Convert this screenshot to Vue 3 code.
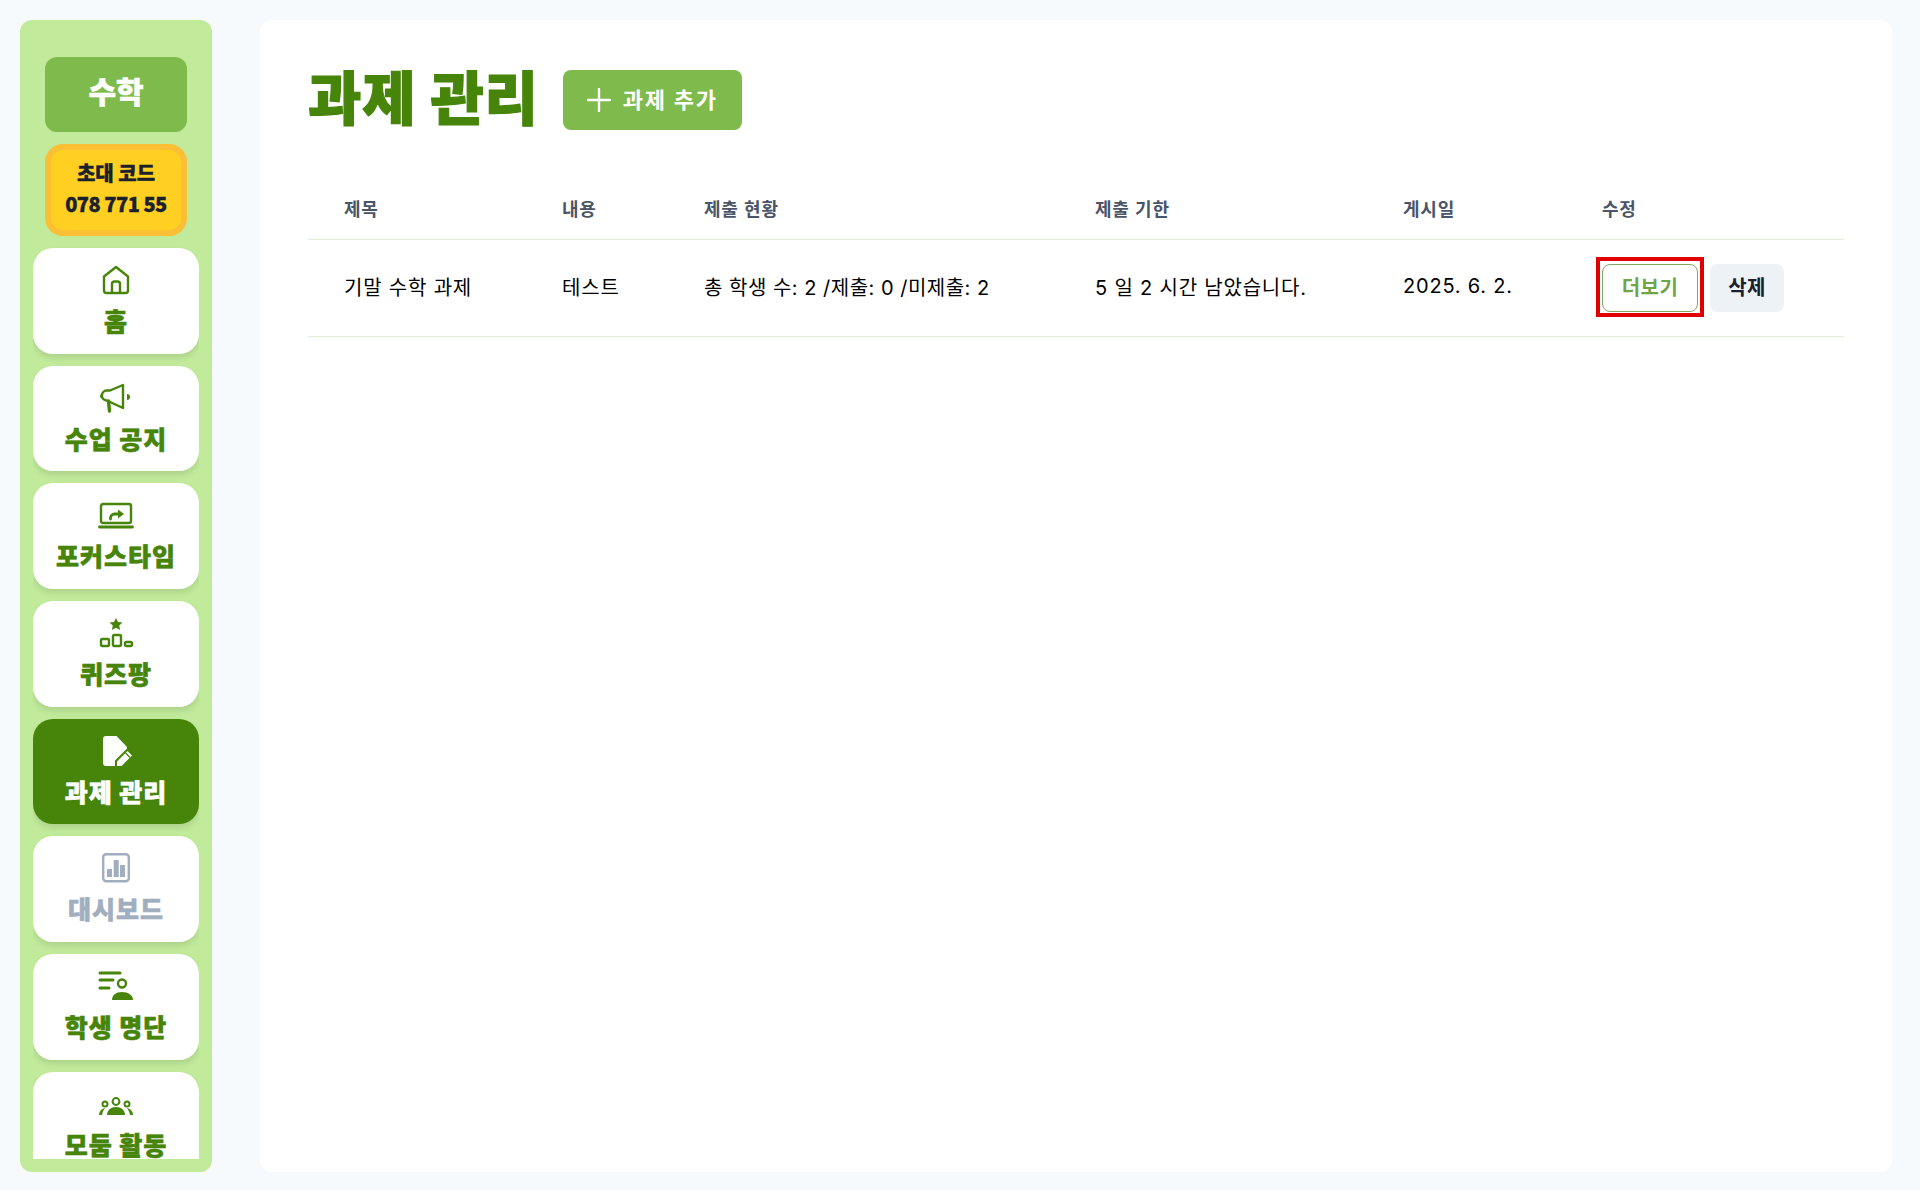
<script setup>
const items = [
  { key: 'home', label: '홈' },
  { key: 'notice', label: '수업 공지' },
  { key: 'focus', label: '포커스타임' },
  { key: 'quiz', label: '퀴즈팡' },
  { key: 'assign', label: '과제 관리', active: true },
  { key: 'dash', label: '대시보드', muted: true },
  { key: 'roster', label: '학생 명단' },
  { key: 'group', label: '모둠 활동' },
]
const columns = [
  { label: '제목', cls: 'c1' },
  { label: '내용', cls: 'c2' },
  { label: '제출 현황', cls: 'c3' },
  { label: '제출 기한', cls: 'c4' },
  { label: '게시일', cls: 'c5' },
  { label: '수정', cls: 'c6' },
]
</script>

<template>
  <div class="page">
    <aside class="sidebar">
      <div class="side-inner">
        <div class="subject">수학</div>
        <div class="code">
          <div>초대 코드</div>
          <div class="digits">078 771 55</div>
        </div>
        <a
          v-for="item in items"
          :key="item.key"
          class="nav"
          :class="{ active: item.active, muted: item.muted }"
        >
          <svg v-if="item.key === 'home'" class="ico" width="36" height="32" viewBox="0 0 36 32" fill="none" stroke="currentColor" stroke-width="2.4" stroke-linejoin="round">
            <path d="M18 3 L30 12.5 V26.5 a2.5 2.5 0 0 1 -2.5 2.5 H8.5 a2.5 2.5 0 0 1 -2.5 -2.5 V12.5 Z" />
            <path d="M14 29 V20 a2.5 2.5 0 0 1 2.5 -2.5 h3 a2.5 2.5 0 0 1 2.5 2.5 V29" />
          </svg>
          <svg v-else-if="item.key === 'notice'" class="ico" width="36" height="32" viewBox="0 0 36 32" fill="none" stroke="currentColor" stroke-width="2.4" stroke-linejoin="round">
            <path d="M25 3 L12 8.5 H9.5 a5 5 0 0 0 -1 10 L11 19.5 L25 26 Z" />
            <path d="M10.5 19 L11.5 29" stroke-width="3.4" stroke-linecap="round" />
            <path d="M29 12 a3 3 0 0 1 0 6 Z" fill="currentColor" stroke="none" />
            <path d="M4.5 11.5 a2.5 2.5 0 0 0 0 5 Z" fill="currentColor" stroke="none" />
          </svg>
          <svg v-else-if="item.key === 'focus'" class="ico" width="36" height="32" viewBox="0 0 36 32" fill="none" stroke="currentColor" stroke-width="2.4">
            <rect x="3" y="5" width="30" height="19" rx="2" />
            <path d="M1.5 28 H34.5" stroke-width="2.8" stroke-linecap="round" />
            <path d="M12.5 20 v-1 a4 4 0 0 1 4 -4 h4" stroke-width="2.8" stroke-linecap="round" />
            <path d="M20 10.5 L26 15 L20 19.5 Z" fill="currentColor" stroke="none" />
          </svg>
          <svg v-else-if="item.key === 'quiz'" class="ico" width="36" height="32" viewBox="0 0 36 32" fill="none" stroke="currentColor" stroke-width="2.4">
            <path d="M18 1 L20 5 L24.5 5.5 L21.2 8.5 L22.1 13 L18 10.7 L13.9 13 L14.8 8.5 L11.5 5.5 L16 5 Z" fill="currentColor" stroke="none" />
            <rect x="3" y="22" width="8" height="7" rx="1.5" />
            <rect x="15" y="18" width="8" height="11" rx="1.5" />
            <rect x="27" y="25" width="7" height="4" rx="1.5" />
          </svg>
          <svg v-else-if="item.key === 'assign'" class="ico" width="36" height="32" viewBox="0 0 36 32" fill="currentColor">
            <path d="M5 4 a3 3 0 0 1 3 -3 h10.5 L29 12 v1.5 L17 25.5 V31 H8 a3 3 0 0 1 -3 -3 Z" />
            <path d="M19 31 v-4.5 L29.5 16 l4.5 4.5 L23.5 31 Z" />
            <path d="M27.5 18 l4.5 4.5" stroke="#46850a" stroke-width="1.3" fill="none" />
          </svg>
          <svg v-else-if="item.key === 'dash'" class="ico" width="36" height="32" viewBox="0 0 36 32" fill="none" stroke="currentColor" stroke-width="2.4">
            <rect x="5.2" y="2.2" width="25.6" height="27" rx="3" />
            <rect x="9" y="17" width="5" height="8" fill="currentColor" stroke="none" />
            <rect x="15.7" y="8" width="5" height="17" fill="currentColor" stroke="none" />
            <rect x="22" y="13" width="5" height="12" fill="currentColor" stroke="none" />
          </svg>
          <svg v-else-if="item.key === 'roster'" class="ico" width="36" height="32" viewBox="0 0 36 32" fill="none" stroke="currentColor" stroke-width="3" stroke-linecap="round">
            <path d="M2 3 H22 M2 10 H15 M2 18 H11" />
            <circle cx="24" cy="13.5" r="4" stroke-width="2.4" />
            <path d="M14 30 c0 -5 4 -8 10 -8 s11 3 11 8 Z" fill="currentColor" stroke="none" />
          </svg>
          <svg v-else class="ico" width="36" height="32" viewBox="0 0 36 32" fill="none" stroke="currentColor" stroke-width="2">
            <circle cx="18" cy="13.5" r="3.4" />
            <circle cx="7" cy="16" r="2.5" />
            <circle cx="29" cy="16" r="2.5" />
            <path d="M9 27 c0 -5 4 -8 9 -8 s9 3 9 8 Z" fill="currentColor" stroke="none" />
            <path d="M1 27 c0 -3 2 -6 6 -7 c-1.5 2 -2.5 4 -3 7 Z M35 27 c0 -3 -2 -6 -6 -7 c1.5 2 2.5 4 3 7 Z" fill="currentColor" stroke="none" />
          </svg>
          <span class="nav-label">{{ item.label }}</span>
        </a>
      </div>
    </aside>

    <main class="main">
      <header class="head">
        <h1 class="title">과제 관리</h1>
        <button class="add">
          <svg width="24" height="24" viewBox="0 0 24 24" fill="none" stroke="currentColor" stroke-width="2.4" stroke-linecap="round">
            <path d="M12 1 V23 M1 12 H23" />
          </svg>
          <span>과제 추가</span>
        </button>
      </header>

      <table class="table">
        <thead>
          <tr>
            <th v-for="c in columns" :key="c.label" :class="c.cls">{{ c.label }}</th>
          </tr>
        </thead>
        <tbody>
          <tr>
            <td>기말 수학 과제</td>
            <td>테스트</td>
            <td class="status">총 학생 수: 2 /제출: 0 /미제출: 2</td>
            <td>5 일 2 시간 남았습니다.</td>
            <td>2025. 6. 2.</td>
            <td class="action-cell">
              <div class="actions">
                <button class="more">더보기</button>
                <button class="del">삭제</button>
              </div>
            </td>
          </tr>
        </tbody>
      </table>
    </main>
  </div>
</template>

<style>
html, body { margin: 0; padding: 0; }
</style>

<style scoped>
.page {
  display: flex;
  gap: 48px;
  box-sizing: border-box;
  height: 1190px;
  padding: 20px 28px 18px 20px;
  background: #f7fafd;
  font-family: Inter, "Noto Sans CJK KR", sans-serif;
  color: #000;
}
.sidebar {
  flex: 0 0 192px;
  box-sizing: border-box;
  padding: 13px;
  background: #c1eb9b;
  border-radius: 12px;
}
.side-inner {
  height: 100%;
  overflow: hidden;
  display: flex;
  flex-direction: column;
  gap: 12px;
  font-family: "Noto Sans CJK KR", sans-serif;
  font-weight: 900;
}
.subject {
  flex: none;
  box-sizing: border-box;
  height: 75px;
  margin: 24px 12px 0;
  padding-top: 13px;
  background: #7fba4c;
  border-radius: 12px;
  color: #fff;
  font-size: 30px;
  line-height: 40px;
  text-align: center;
  -webkit-text-stroke: 0.5px currentColor;
}
.code {
  flex: none;
  box-sizing: border-box;
  height: 92px;
  margin: 0 12px;
  padding-top: 6.5px;
  background: #ffd022;
  border: 6px solid #fbbf36;
  border-radius: 18px;
  color: #1a202c;
  font-size: 20px;
  line-height: 31px;
  text-align: center;
  -webkit-text-stroke: 0.4px currentColor;
}
.digits {
  letter-spacing: -0.5px;
}
.nav {
  flex: none;
  box-sizing: border-box;
  height: 105.7px;
  display: flex;
  flex-direction: column;
  align-items: center;
  padding-top: 16px;
  background: #fff;
  border-radius: 20px;
  box-shadow: 0 4px 6px rgba(0, 0, 0, 0.1);
  color: #46850a;
}
.nav.active { background: #46850a; color: #fff; }
.nav.muted { color: #a0aec0; }
.ico { flex: none; display: block; }
.nav-label {
  margin-top: 6px;
  font-size: 25px;
  line-height: 36px;
  letter-spacing: 1px;
  white-space: nowrap;
  -webkit-text-stroke: 0.6px currentColor;
}
.main {
  flex: 1;
  min-width: 0;
  box-sizing: border-box;
  padding: 50px 48px;
  background: #fff;
  border-radius: 12px;
}
.head {
  display: flex;
  align-items: center;
  gap: 24px;
  height: 60px;
  margin-bottom: 50px;
}
.title {
  margin: 0;
  padding-bottom: 11px;
  font-family: "Noto Sans CJK KR", sans-serif;
  font-weight: 900;
  font-size: 58px;
  line-height: 60px;
  letter-spacing: 0.8px;
  color: #46850a;
  -webkit-text-stroke: 1.2px currentColor;
}
.add {
  display: flex;
  align-items: center;
  gap: 12px;
  box-sizing: border-box;
  width: 179px;
  height: 60px;
  padding: 0 0 5px 24px;
  border: 0;
  border-radius: 8px;
  background: #7fba4c;
  color: #fff;
  font-family: inherit;
  font-size: 22px;
  font-weight: 700;
  letter-spacing: 1.8px;
}
.add svg { margin-top: 5px; }
.table {
  width: 100%;
  table-layout: fixed;
  border-collapse: collapse;
}
th {
  box-sizing: border-box;
  height: 59px;
  padding: 0 0 3px 36px;
  border-bottom: 1px solid #e3efd2;
  text-align: left;
  color: #4a5568;
  font-size: 18px;
  font-weight: 600;
  letter-spacing: 0.8px;
}
.c1 { width: 218px; }
.c2 { width: 142px; }
.c3 { width: 391px; }
.c4 { width: 308px; }
.c5 { width: 199px; }
.c6 { width: 278px; }
td {
  box-sizing: border-box;
  height: 97px;
  padding: 0 0 2.5px 36px;
  border-bottom: 1px solid #e3efd2;
  font-size: 20px;
  letter-spacing: 0.8px;
}
td.status {
  letter-spacing: 0.5px;
}
td.action-cell {
  padding-bottom: 0;
}
.actions {
  display: flex;
  gap: 12px;
}
.actions button {
  box-sizing: border-box;
  height: 48px;
  padding: 0 0 3px;
  border-radius: 8px;
  font-family: inherit;
  font-size: 20px;
  font-weight: 700;
  letter-spacing: 0.4px;
  white-space: nowrap;
}
.more {
  position: relative;
  width: 96px;
  border: 1px solid #7fa85f;
  background: #fff;
  color: #6fa544;
}
.more::after {
  content: "";
  position: absolute;
  left: -7px;
  right: -7px;
  top: -8px;
  bottom: -6px;
  border: 4px solid #e00000;
  pointer-events: none;
}
.del {
  width: 74px;
  border: 0;
  background: #edf2f7;
  color: #1a202c;
}
</style>
